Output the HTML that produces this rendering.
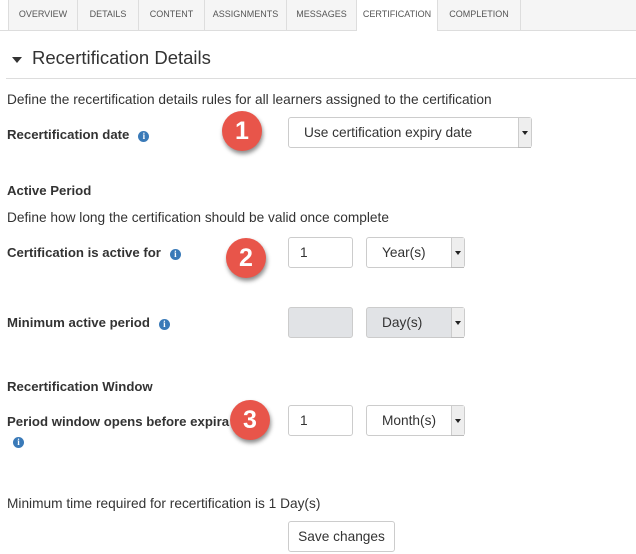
<!DOCTYPE html>
<html><head><style>
*{box-sizing:border-box;margin:0;padding:0}
body{width:636px;height:554px;background:#fff;font-family:"Liberation Sans",sans-serif;color:#333;position:relative;overflow:hidden;font-size:13.7px}
.a{position:absolute;white-space:nowrap}
.tab{position:absolute;top:0;height:31px;background:#f5f5f5;border:1px solid #ddd;border-top:none;font-size:9px;color:#555;text-align:center;line-height:29px}
.b{font-weight:bold;font-size:13.2px}
.i{display:inline-block;width:11px;height:11px;border-radius:50%;background:#3a7ab8;color:#fff;font-size:9px;font-weight:bold;text-align:center;line-height:11px;font-family:"Liberation Serif",serif;vertical-align:0;margin-left:9px}
.box{position:absolute;border:1px solid #ccc;border-radius:3px;background:#fff;font-size:13.7px;line-height:29px}
.sel .ar{position:absolute;right:0;top:0;bottom:0;width:13px;background:#eee;border-left:1px solid #ccc;box-shadow:0 1px 0 #bbb}
.sel .ar:after{content:"";position:absolute;left:3px;top:13px;border-left:3px solid transparent;border-right:3px solid transparent;border-top:4px solid #222}
.g{background:#e1e3e6}
.c{position:absolute;width:40px;height:40px;border-radius:50%;background:#e8554a;color:#fff;font-size:25px;font-weight:bold;text-align:center;line-height:40px;box-shadow:1px 3px 4px rgba(0,0,0,.45)}
</style></head><body>
<div class="tab" style="left:8px;width:70px">OVERVIEW</div>
<div class="tab" style="left:77px;width:62px">DETAILS</div>
<div class="tab" style="left:138px;width:67px">CONTENT</div>
<div class="tab" style="left:204px;width:83px">ASSIGNMENTS</div>
<div class="tab" style="left:286px;width:71px">MESSAGES</div>
<div class="tab" style="left:356px;width:82px;background:#fff;border-bottom:none">CERTIFICATION</div>
<div class="tab" style="left:437px;width:84px">COMPLETION</div>
<div class="tab" style="left:520px;width:130px;color:transparent">x</div>
<div class="a" style="left:0;top:30px;width:356px;height:1px;background:#ddd"></div>
<div class="a" style="left:437px;top:30px;width:200px;height:1px;background:#ddd"></div>
<div class="a" style="left:12px;top:57px;border-left:5px solid transparent;border-right:5px solid transparent;border-top:6px solid #333"></div>
<div class="a" style="left:32px;top:47px;font-size:18.5px;color:#333">Recertification Details</div>
<div class="a" style="left:6px;top:78px;width:630px;height:1px;background:#ddd"></div>

<div class="a" style="left:7px;top:92px">Define the recertification details rules for all learners assigned to the certification</div>
<div class="a b" style="left:7px;top:127px">Recertification date<span class="i">i</span></div>
<div class="box sel" style="left:288px;top:117px;width:244px;height:31px;padding-left:15px">Use certification expiry date<div class="ar"></div></div>
<div class="c" style="left:222px;top:111px">1</div>

<div class="a b" style="left:7px;top:183px">Active Period</div>
<div class="a" style="left:7px;top:210px">Define how long the certification should be valid once complete</div>
<div class="a b" style="left:7px;top:245px">Certification is active for<span class="i">i</span></div>
<div class="box" style="left:288px;top:237px;width:65px;height:31px;padding-left:11px">1</div>
<div class="box sel" style="left:366px;top:237px;width:99px;height:31px;padding-left:15px">Year(s)<div class="ar"></div></div>
<div class="c" style="left:226px;top:238px">2</div>

<div class="a b" style="left:7px;top:315px">Minimum active period<span class="i">i</span></div>
<div class="box g" style="left:288px;top:307px;width:65px;height:31px"></div>
<div class="box sel g" style="left:366px;top:307px;width:99px;height:31px;padding-left:15px">Day(s)<div class="ar"></div></div>

<div class="a b" style="left:7px;top:379px">Recertification Window</div>
<div class="a b" style="left:7px;top:414px">Period window opens before expira</div>
<div class="a" style="left:4px;top:433px"><span class="i">i</span></div>
<div class="c" style="left:230px;top:400px">3</div>
<div class="box" style="left:288px;top:405px;width:65px;height:31px;padding-left:11px">1</div>
<div class="box sel" style="left:366px;top:405px;width:99px;height:31px;padding-left:15px">Month(s)<div class="ar"></div></div>

<div class="a" style="left:7px;top:496px">Minimum time required for recertification is 1 Day(s)</div>
<div class="box" style="left:288px;top:521px;width:107px;height:31px;text-align:center">Save changes</div>
</body></html>
